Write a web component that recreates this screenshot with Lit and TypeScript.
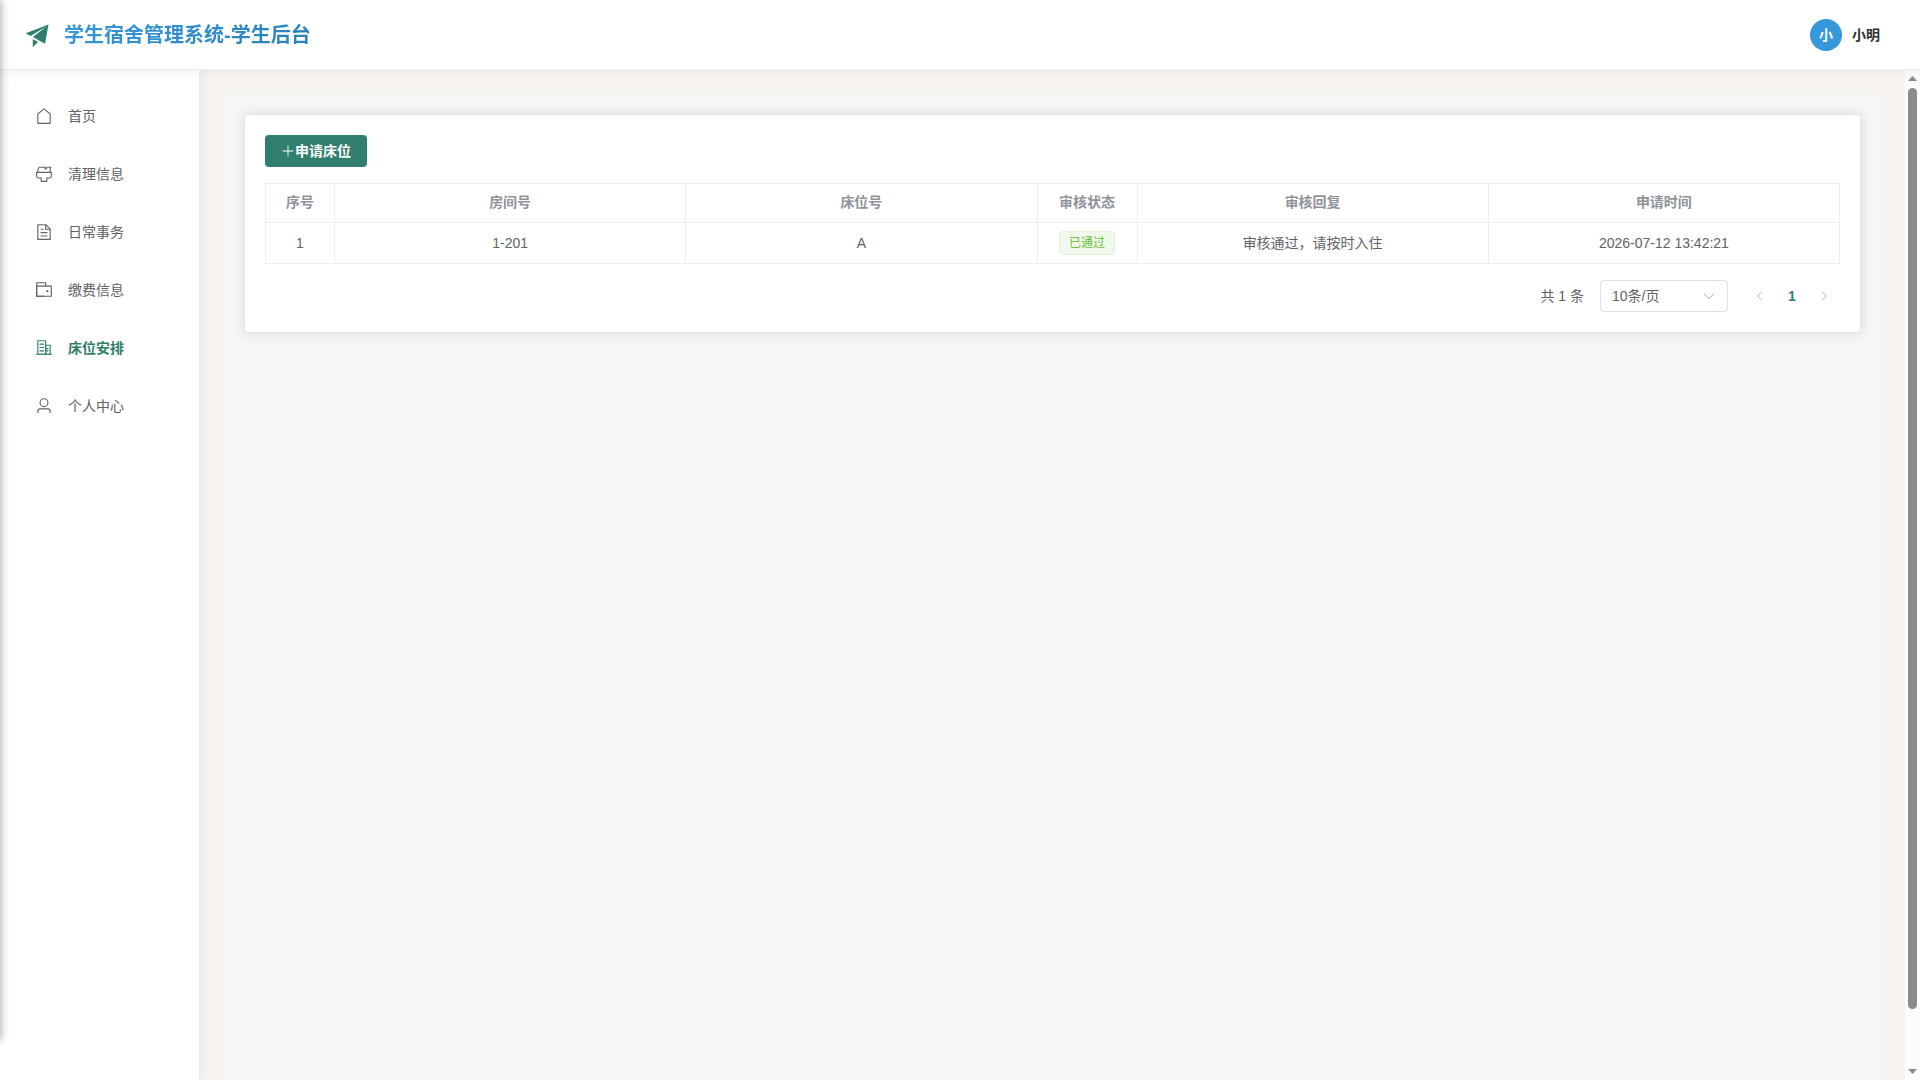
import { LitElement, html, css, svg } from "lit";
import { customElement, property } from "lit/decorators.js";
import { classMap } from "lit/directives/class-map.js";

const ICONS: Record<string, string[]> = {
  promotion: ["m64 448 832-320-128 704-446.08-243.328L832 192 242.816 545.536 64 448zm256 512V657.024L512 768 320 960z"],
  house: ["M192 413.952V896h640V413.952L512 147.328 192 413.952zM139.52 374.4l352-293.312a32 32 0 0 1 40.96 0l352 293.312A32 32 0 0 1 896 398.976V928a32 32 0 0 1-32 32H160a32 32 0 0 1-32-32V398.976a32 32 0 0 1 11.52-24.576z"],
  brush: ["M896 448H128v192a64 64 0 0 0 64 64h192v192h256V704h192a64 64 0 0 0 64-64V448zm-770.752-64c0-47.552 5.248-90.24 15.552-128 14.72-54.016 42.496-107.392 83.2-160h417.28l-15.36 70.336L736 96h211.2c-24.832 42.88-41.92 96.256-51.2 160a663.872 663.872 0 0 0-6.144 128H960v256a128 128 0 0 1-128 128H704v160a32 32 0 0 1-32 32H352a32 32 0 0 1-32-32V768H192A128 128 0 0 1 64 640V384h61.248zm64 0h636.544c-2.048-45.824.256-91.584 6.848-137.216 4.48-30.848 10.688-59.776 18.688-86.784h-96.64l-221.12 141.248L561.92 160H256.512c-25.856 37.888-43.776 75.456-53.952 112.832-8.768 32.064-13.248 69.12-13.312 111.168z"],
  document: ["M832 384H576V128H192v768h640V384zm-26.496-64L640 154.496V320h165.504zM160 64h480l256 256v608a32 32 0 0 1-32 32H160a32 32 0 0 1-32-32V96a32 32 0 0 1 32-32zm160 448h384v64H320v-64zm0-192h160v64H320v-64zm0 384h384v64H320v-64z"],
  wallet: [
    "M640 288h-64V128H128v704h384v32a32 32 0 0 0 32 32H96a32 32 0 0 1-32-32V96a32 32 0 0 1 32-32h512a32 32 0 0 1 32 32v192z",
    "M128 320v512h768V320H128zm-32-64h832a32 32 0 0 1 32 32v576a32 32 0 0 1-32 32H96a32 32 0 0 1-32-32V288a32 32 0 0 1 32-32z",
    "M704 640a64 64 0 1 1 0-128 64 64 0 0 1 0 128z",
  ],
  office: [
    "M192 128v704h384V128H192zm-32-64h448a32 32 0 0 1 32 32v768a32 32 0 0 1-32 32H160a32 32 0 0 1-32-32V96a32 32 0 0 1 32-32z",
    "M256 256h256v64H256v-64zm0 192h256v64H256v-64zm0 192h256v64H256v-64zm384-128h128v64H640v-64zm0 128h128v64H640v-64zM64 832h896v64H64v-64z",
    "M640 384v448h192V384H640zm-32-64h256a32 32 0 0 1 32 32v512a32 32 0 0 1-32 32H608a32 32 0 0 1-32-32V352a32 32 0 0 1 32-32z",
  ],
  user: ["M512 512a192 192 0 1 0 0-384 192 192 0 0 0 0 384zm0 64a256 256 0 1 1 0-512 256 256 0 0 1 0 512zm320 320v-96a96 96 0 0 0-96-96H288a96 96 0 0 0-96 96v96a32 32 0 1 1-64 0v-96a160 160 0 0 1 160-160h448a160 160 0 0 1 160 160v96a32 32 0 1 1-64 0z"],
  plus: ["M480 480V128a32 32 0 0 1 64 0v352h352a32 32 0 1 1 0 64H544v352a32 32 0 1 1-64 0V544H128a32 32 0 0 1 0-64h352z"],
  down: ["M831.872 340.864 512 652.672 192.128 340.864a30.592 30.592 0 0 0-42.752 0 29.12 29.12 0 0 0 0 41.6L489.664 714.24a32 32 0 0 0 44.672 0l340.288-331.712a29.12 29.12 0 0 0 0-41.728 30.592 30.592 0 0 0-42.752 0z"],
  left: ["M609.408 149.376 277.76 489.6a32 32 0 0 0 0 44.672l331.648 340.352a29.12 29.12 0 0 0 41.728 0 30.592 30.592 0 0 0 0-42.752L339.264 511.936l311.872-319.872a30.592 30.592 0 0 0 0-42.688 29.12 29.12 0 0 0-41.728 0z"],
  right: ["M340.864 149.312a30.592 30.592 0 0 0 0 42.752L652.736 512 340.864 831.872a30.592 30.592 0 0 0 0 42.752 29.12 29.12 0 0 0 41.728 0L714.24 534.336a32 32 0 0 0 0-44.672L382.592 149.376a29.12 29.12 0 0 0-41.728 0z"],
};

@customElement("app-icon")
export class AppIcon extends LitElement {
  @property() name = "";

  static styles = css`
    :host { display: inline-flex; flex: none; width: 1em; height: 1em; }
    .glyph { display: block; width: 100%; height: 100%; fill: currentColor; }
  `;

  render() {
    return html`<svg class="glyph" viewBox="0 0 1024 1024" aria-hidden="true">
      ${(ICONS[this.name] ?? []).map((d) => svg`<path d=${d}></path>`)}
    </svg>`;
  }
}

const MENU = [
  { label: "首页", icon: "house" },
  { label: "清理信息", icon: "brush" },
  { label: "日常事务", icon: "document" },
  { label: "缴费信息", icon: "wallet" },
  { label: "床位安排", icon: "office", active: true },
  { label: "个人中心", icon: "user" },
];

const COLUMNS = ["序号", "房间号", "床位号", "审核状态", "审核回复", "申请时间"];

const ROWS = [
  { room: "1-201", bed: "A", status: "已通过", reply: "审核通过，请按时入住", time: "2026-07-12 13:42:21" },
];

@customElement("app-root")
export class AppRoot extends LitElement {
  static styles = css`
    :host {
      display: block;
      font-family: "Liberation Sans", "Noto Sans CJK SC", sans-serif;
      font-size: 14px;
      line-height: 20px;
      color: #606266;
    }
    * { box-sizing: border-box; }
    button, select { font: inherit; color: inherit; margin: 0; }

    .shell {
      position: relative;
      display: flex;
      flex-direction: column;
      height: 100vh;
      overflow: hidden;
      background: #f8f4f1;
    }

    .header {
      position: relative;
      z-index: 2;
      display: flex;
      align-items: center;
      justify-content: space-between;
      height: 70px;
      flex: none;
      padding: 0 40px 0 24px;
      background: #fff;
      border-bottom: 1px solid #ebeeed;
      box-shadow: 0 2px 12px rgba(0, 0, 0, 0.06);
    }
    .brand { display: flex; align-items: center; gap: 12px; }
    .brand-icon { font-size: 28px; color: #2f7e6e; }
    .brand-name {
      margin: 0;
      font-size: 20px;
      line-height: 30px;
      font-weight: 700;
      background: linear-gradient(135deg, #3498db, #2980b9);
      background-clip: text;
      -webkit-background-clip: text;
      color: transparent;
    }
    .account {
      display: flex;
      align-items: center;
      gap: 10px;
      padding: 0;
      border: 0;
      background: none;
      font-weight: 700;
      color: #303133;
    }
    .avatar {
      display: grid;
      place-items: center;
      width: 32px;
      height: 32px;
      border-radius: 50%;
      background: #3498db;
      color: #fff;
    }

    .body { display: flex; flex: 1; min-height: 0; }

    .sidebar {
      position: relative;
      z-index: 1;
      flex: none;
      width: 200px;
      padding: 21px 0;
      background: #fff;
      border-right: 1px solid #ebeeed;
      box-shadow: 2px 0 12px rgba(0, 0, 0, 0.06);
    }
    .menu { display: flex; flex-direction: column; gap: 8px; margin: 0; padding: 0; list-style: none; }
    .menu-link {
      display: flex;
      align-items: center;
      gap: 15px;
      height: 50px;
      padding: 0 35px;
      color: #606266;
      text-decoration: none;
    }
    .menu-link.active { color: #2f7e6e; font-weight: 700; }
    .menu-icon { font-size: 18px; }

    .main { flex: 1; min-width: 0; padding: 24px 24px 0; overflow: hidden; }
    .page { min-height: 100%; padding: 20px; background: #f4f7f6; }
    .card {
      padding: 20px;
      background: #fff;
      border: 1px solid #e4e7ed;
      border-radius: 4px;
      box-shadow: 0 0 12px rgba(0, 0, 0, 0.12);
    }

    .apply {
      display: flex;
      align-items: center;
      height: 32px;
      padding: 0 16px;
      border: 0;
      border-radius: 4px;
      background: #2f7e6e;
      color: #fff;
      font-weight: 700;
    }

    .grid {
      width: 100%;
      margin: 16px 0;
      border-collapse: collapse;
      table-layout: fixed;
    }
    .grid th, .grid td { border: 1px solid #ebeef5; padding: 0 12px; text-align: center; }
    .grid th { height: 39px; padding-bottom: 2px; color: #909399; font-weight: 700; }
    .grid td { height: 41px; }
    .col-index { width: 69px; }
    .col-status { width: 100px; }
    .tag {
      display: inline-block;
      vertical-align: middle;
      height: 24px;
      padding: 0 9px;
      border: 1px solid #e1f3d8;
      border-radius: 4px;
      background: #f0f9eb;
      color: #67c23a;
      font-size: 12px;
      line-height: 22px;
    }

    .pager { display: flex; align-items: center; justify-content: flex-end; gap: 16px; }
    .size { position: relative; display: flex; align-items: center; width: 128px; }
    .size-select {
      appearance: none;
      width: 100%;
      height: 32px;
      padding: 0 32px 0 11px;
      border: 1px solid #dcdfe6;
      border-radius: 4px;
      background: #fff;
    }
    .size-arrow { position: absolute; right: 12px; color: #a8abb2; pointer-events: none; }
    .pages { display: flex; }
    .page-btn {
      display: grid;
      place-items: center;
      width: 32px;
      height: 32px;
      padding: 0;
      border: 0;
      background: none;
    }
    .page-btn.current { color: #2f7e6e; font-weight: 700; }
    .page-btn.step { color: #a8abb2; font-size: 12px; }

    .scrollbar {
      display: flex;
      flex-direction: column;
      align-items: center;
      flex: none;
      width: 15px;
      padding: 6px 0;
      background: #fcfcfc;
    }
    .caret { flex: none; width: 9px; height: 5px; background: #8b8b8b; }
    .caret.up { clip-path: polygon(50% 0, 100% 100%, 0 100%); }
    .caret.down { clip-path: polygon(0 0, 100% 0, 50% 100%); }
    .track { flex: 1; width: 9px; margin: 7px 0 6px; }
    .thumb { height: 94.5%; border-radius: 5px; background: #8b8b8b; }

    /* Closed drawer parked beyond the left edge; only its shadow reaches the page. */
    .drawer {
      position: absolute;
      z-index: 3;
      top: 0;
      bottom: 40px;
      left: -20px;
      width: 20px;
      box-shadow: 0 0 10px rgba(0, 0, 0, 0.4);
      pointer-events: none;
    }
  `;

  render() {
    return html`
      <div class="shell">
        <header class="header">
          <div class="brand">
            <app-icon class="brand-icon" name="promotion"></app-icon>
            <h1 class="brand-name">学生宿舍管理系统-学生后台</h1>
          </div>
          <button class="account" type="button">
            <span class="avatar">小</span>
            <span>小明</span>
          </button>
        </header>
        <div class="body">
          <nav class="sidebar">
            <ul class="menu">
              ${MENU.map((item) => html`<li>
                <a class=${classMap({ "menu-link": true, active: !!item.active })} href="#">
                  <app-icon class="menu-icon" name=${item.icon}></app-icon>
                  <span>${item.label}</span>
                </a>
              </li>`)}
            </ul>
          </nav>
          <main class="main">
            <div class="page">
              <section class="card">
                <button class="apply" type="button"><app-icon name="plus"></app-icon>申请床位</button>
                <table class="grid">
                  <colgroup>
                    <col class="col-index"><col><col><col class="col-status"><col><col>
                  </colgroup>
                  <thead>
                    <tr>${COLUMNS.map((name) => html`<th scope="col">${name}</th>`)}</tr>
                  </thead>
                  <tbody>
                    ${ROWS.map((row, i) => html`<tr>
                      <td>${i + 1}</td>
                      <td>${row.room}</td>
                      <td>${row.bed}</td>
                      <td><span class="tag">${row.status}</span></td>
                      <td>${row.reply}</td>
                      <td>${row.time}</td>
                    </tr>`)}
                  </tbody>
                </table>
                <div class="pager">
                  <label for="page-size">共 ${ROWS.length} 条</label>
                  <div class="size">
                    <select class="size-select" id="page-size"><option>10条/页</option></select>
                    <app-icon class="size-arrow" name="down"></app-icon>
                  </div>
                  <div class="pages">
                    <button class="page-btn step" type="button" disabled><app-icon name="left"></app-icon></button>
                    <button class="page-btn current" type="button">1</button>
                    <button class="page-btn step" type="button" disabled><app-icon name="right"></app-icon></button>
                  </div>
                </div>
              </section>
            </div>
          </main>
          <div class="scrollbar" aria-hidden="true">
            <div class="caret up"></div>
            <div class="track"><div class="thumb"></div></div>
            <div class="caret down"></div>
          </div>
        </div>
        <div class="drawer" aria-hidden="true"></div>
      </div>
    `;
  }
}
